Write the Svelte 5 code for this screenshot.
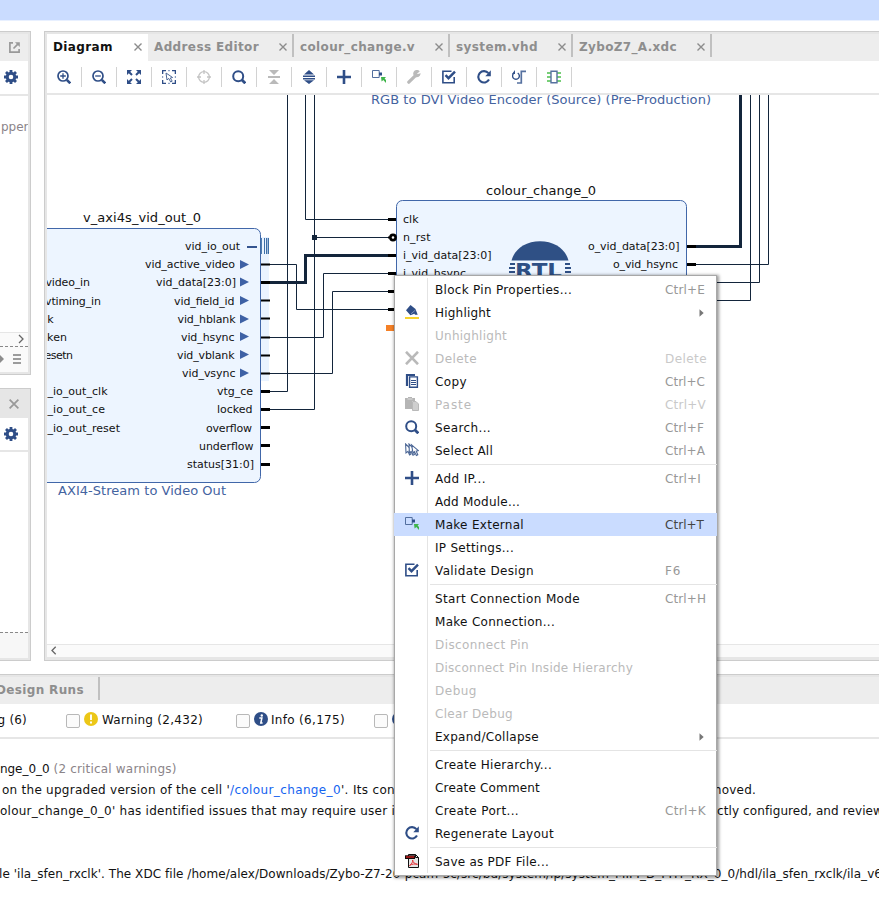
<script>
  // Spreads the letters of a label so that it fills the given width.
  function fit(node, width) {
    const natural = node.getBoundingClientRect().width;
    const count = node.textContent.length;
    if (width && count) node.style.letterSpacing = (width - natural) / count + 'px';
  }

  const tabs = [
    { label: 'Diagram', w: 101, t: 60, active: true },
    { label: 'Address Editor', w: 146, t: 105 },
    { label: 'colour_change.v', w: 156, t: 115 },
    { label: 'system.vhd', w: 123, t: 82 },
    { label: 'ZyboZ7_A.xdc', w: 139, t: 98 }
  ];

  const tools = ['zoomin', 'zoomout', 'fit', 'selectarea', 'target', 'search', 'collapse', 'expand',
    'plus', 'external', 'wrench', 'validate', 'refresh', 'route', 'chip'];

  const menu = [
    { label: 'Block Pin Properties...', t: 137, key: 'Ctrl+E', k: 40 },
    { label: 'Highlight', t: 56, icon: 'highlight', sub: true },
    { label: 'Unhighlight', t: 72, off: true },
    { label: 'Delete', t: 42, icon: 'delete', off: true, key: 'Delete', k: 42 },
    { label: 'Copy', t: 32, icon: 'copy', key: 'Ctrl+C', k: 40 },
    { label: 'Paste', t: 37, icon: 'paste', off: true, key: 'Ctrl+V', k: 41 },
    { label: 'Search...', t: 56, icon: 'search', key: 'Ctrl+F', k: 39 },
    { label: 'Select All', t: 58, icon: 'selectall', key: 'Ctrl+A', k: 40 },
    null,
    { label: 'Add IP...', t: 51, icon: 'plus', key: 'Ctrl+I', k: 36 },
    { label: 'Add Module...', t: 85, },
    { label: 'Make External', t: 89, icon: 'external', key: 'Ctrl+T', k: 39, active: true },
    { label: 'IP Settings...', t: 79 },
    { label: 'Validate Design', t: 99, icon: 'validate', key: 'F6', k: 16 },
    null,
    { label: 'Start Connection Mode', t: 145, key: 'Ctrl+H', k: 41 },
    { label: 'Make Connection...', t: 120 },
    { label: 'Disconnect Pin', t: 94, off: true },
    { label: 'Disconnect Pin Inside Hierarchy', t: 198, off: true },
    { label: 'Debug', t: 42, off: true },
    { label: 'Clear Debug', t: 78, off: true },
    { label: 'Expand/Collapse', t: 104, sub: true },
    null,
    { label: 'Create Hierarchy...', t: 117 },
    { label: 'Create Comment', t: 105 },
    { label: 'Create Port...', t: 84, key: 'Ctrl+K', k: 41 },
    { label: 'Regenerate Layout', t: 119, icon: 'refresh' },
    null,
    { label: 'Save as PDF File...', t: 114, icon: 'pdf' }
  ];

  // Pin label, right edge, baseline, width
  const outPins = [
    ['vid_io_out', 240, 250, 55], ['vid_active_video', 235, 268, 90], ['vid_data[23:0]', 236, 286, 80],
    ['vid_field_id', 234.5, 305, 60.5], ['vid_hblank', 235.5, 323, 58], ['vid_hsync', 234.5, 341, 53.5],
    ['vid_vblank', 234.5, 359, 57.5], ['vid_vsync', 235.5, 377, 53.5], ['vtg_ce', 253, 395, 36],
    ['locked', 252.5, 413, 35.5], ['overflow', 252, 432, 46], ['underflow', 253.5, 450, 54.5],
    ['status[31:0]', 254, 468, 67]
  ];
  const inPins = [
    ['video_in', 90, 286, 44.5], ['vtiming_in', 101, 305, 56], ['aclk', 53.5, 323, 23],
    ['aclken', 67, 341, 36], ['aresetn', 73, 359, 38.5], ['_io_out_clk', 107.5, 395, 60],
    ['_io_out_ce', 105, 413, 57.5], ['_io_out_reset', 120, 432, 72.5]
  ];
  const arrows = [264.5, 282, 300.5, 319, 336.5, 354.5, 373];
  const ports = [264.5, 300.5, 318.5, 337.5, 355.5, 373.5];
  const thickPorts = [282.5, 391.5, 409.5, 427.5, 445.5, 464.5];
  const wires = [
    'M270 264.5H296.5V309.5H389', 'M270 337.5H323.5V273.5H389', 'M270 373.5H332.5V291.5H389',
    'M270 391.5H287.5V95', 'M270 409.5H314.5V95', 'M305.5 95V219.5H389', 'M314.5 237.5H389',
    'M696 264.5H768.5V95', 'M687 282.5H759.5V95', 'M687 300.5H750.5V95'
  ];
</script>

{#snippet icon(name)}
  <svg class="ico" width="14" height="14" viewBox="0 0 14 14" fill="none" stroke="#2f4e87" stroke-width="2">
    {#if name === 'zoomin' || name === 'zoomout'}
      <circle cx="6" cy="6" r="5" stroke-width="1.7" /><path d="M9.8 9.8L13.3 13.3" stroke-width="2.6" />
      <path d={name === 'zoomin' ? 'M3.2 6H8.8M6 3.2V8.8' : 'M3.2 6H8.8'} stroke-width="1.3" />
    {:else if name === 'search'}
      <circle cx="6.2" cy="6.2" r="5" /><path d="M10 10L13.3 13.3" stroke-width="2.8" />
    {:else if name === 'fit'}
      <g fill="#2f4e87" stroke="none"><path d="M0 0H5L0 5ZM14 0V5L9 0ZM0 14V9L5 14ZM14 14H9L14 9Z" /></g>
      <path d="M1.5 1.5L5 5M12.5 1.5L9 5M1.5 12.5L5 9M12.5 12.5L9 9" />
    {:else if name === 'selectarea'}
      <path d="M.6 4V.6H4M10 .6H13.4V4M13.4 10V13.4H10M4 13.4H.6V10" stroke-width="1.4" />
      <path d="M6 .6H8M13.4 6V8M6 13.4H8M.6 6V8" stroke="#8fa2c4" stroke-width="1.2" />
      <path d="M4 3L5 10L6.7 8.4L8.7 12L10.2 11.2L8.3 8L10.6 7.5Z" stroke="#4c6796" stroke-width="1" fill="#fff" />
    {:else if name === 'target'}
      <circle cx="7" cy="7" r="5.4" stroke="#c4c4c4" stroke-width="1.3" />
      <path d="M7 0V4M7 10V14M0 7H4M10 7H14" stroke="#c4c4c4" stroke-width="1.3" />
    {:else if name === 'collapse'}
      <g fill="#bababa" stroke="none"><path d="M2 0H12L7 5ZM1 6H13V8H1ZM2 14H12L7 9Z" /></g>
    {:else if name === 'expand'}
      <g fill="#2f4e87" stroke="none"><path d="M7 0L12 4.5H2ZM1 5.4H13V7H1ZM1 8H13V9.4H1ZM7 14L12 10.2H2Z" /></g>
    {:else if name === 'plus'}
      <path d="M7 0V14M0 7H14" stroke-width="2.6" />
    {:else if name === 'external'}
      <path d="M.5 .5H7.2V7.5H.5Z" stroke="#536f9f" stroke-width="1" fill="none" />
      <path d="M7 2.5H10V5.5H7Z" fill="#2f4e87" stroke="none" />
      <path d="M9 7H14L12.6 8.6L14 10V13L11.3 10.1L9.6 11.5Z" fill="#3fb54a" stroke="none" />
    {:else if name === 'wrench'}
      <path d="M1.8 12.2L8.2 5.8" stroke="#bababa" stroke-width="3.2" stroke-linecap="round" />
      <path d="M11.8 1.3A3 3 0 1 0 12.8 4.2L10 4.8L9.2 3.8Z" fill="#bababa" stroke="#bababa" stroke-width="1.3" />
    {:else if name === 'validate'}
      <path d="M9.5 1.2H.9V12.7H12.2V7" stroke-width="1.6" /><path d="M3.5 5.2L6.5 8.2L13 1.6" stroke-width="2.4" />
    {:else if name === 'refresh'}
      <path d="M11.4 3.2A5.7 5.7 0 1 0 12 9.6" stroke-width="2.1" /><path d="M13.8 .3V6.2H8.3Z" fill="#2f4e87" stroke="none" />
    {:else if name === 'route'}
      <path d="M5.7 3A3.4 3.4 0 1 1 2.2 3" stroke-width="1.4" /><path d="M3 0V4H0Z" fill="#2f4e87" stroke="none" />
      <path d="M5 13H9.3V1.3H14" stroke="#5671a0" stroke-width="1.7" />
    {:else if name === 'chip'}
      <path d="M0 3H4M0 7H4M0 11H4M10 3H14M10 7H14M10 11H14" stroke="#4cc04c" stroke-width="1.6" />
      <path d="M4 1.3H10V12.7H4Z" stroke="#5671a0" stroke-width="1.4" fill="#fff" />
    {:else if name === 'highlight'}
      <path d="M5.5 0L10.5 4L12.7 9.8H10L9.4 8.8L5.4 10.2L1 5.3Z" fill="#2f4e87" stroke="none" />
      <path d="M6 8.8L10.5 5" stroke="#8fa2c4" stroke-width=".8" /><path d="M0 13H14" stroke="#f6cf16" stroke-width="1.8" />
    {:else if name === 'delete'}
      <path d="M1 .8L13 13.2M13 .8L1 13.2" stroke="#b9b9b9" stroke-width="2.6" />
    {:else if name === 'copy'}
      <path d="M2 12V1H10" stroke-width="2.2" /><path d="M4.6 2.9H12.4V13.3H4.6Z" fill="#fff" stroke-width="1.4" />
      <path d="M6 6.5H11M6 8.5H11M6 10.5H11" stroke-width="1" />
    {:else if name === 'paste'}
      <path d="M0 1H3V0H7V1H10V4H7V12H0Z" fill="#b5b5b5" stroke="none" /><path d="M2.5 2H7.5" stroke="#ddd" stroke-width="1" />
      <path d="M7.5 4.5H11L13.5 7V13.5H7.5Z" fill="#cfcfcf" stroke="#b9b9b9" stroke-width="1" />
    {:else if name === 'selectall'}
      <g stroke="#4c6796" stroke-width="1.1" fill="#fff">
        <path d="M.6 1L1 10L3 8.4L4.6 12L6 11L4.8 7.4L7 7Z" />
        <path d="M4 1L4.400 10L6.200 8.400L8 12.200L9.400 11.400L8 7.600L10.200 7Z" />
        <path d="M6.600 1.800L8 10L9.400 8.600L11.400 12.600L12.800 11.800L11.200 8.200L13.400 7.600Z" />
      </g>
    {:else if name === 'pdf'}
      <path d="M3.5 .5H10.5L13.5 3.5V13.5H3.5Z" fill="#e6e6e6" stroke="#111" stroke-width="1" />
      <path d="M10.5 .5V3.5H13.5" stroke="#111" stroke-width="1" />
      <path d="M0 1.3H10V5H0Z" fill="#150808" stroke="none" /><path d="M1 3H9.2" stroke="#e22" stroke-width="1.2" />
      <path d="M4.5 11.5C7 10 8 7.500 7.600 6C8 8.500 10 10.300 12.500 10.300C10 9.600 7 10 4.500 11.500" stroke="#e5343a" stroke-width="1" />
    {:else if name === 'gear'}
      <path d="M7 0V14M0 7H14M2 2L12 12M12 2L2 12" stroke-width="2.8" />
      <circle cx="7" cy="7" r="3.8" fill="#fff" stroke-width="3" />
    {/if}
  </svg>
{/snippet}

{#snippet cross(size, color)}
  <svg class="ico" width={size} height={size} viewBox="0 0 8 8"><path d="M.5 .5L7.5 7.5M7.5 .5L.5 7.5" stroke={color} stroke-width="1.4" /></svg>
{/snippet}

<div class="app">
  <div class="banner"></div>

  <div class="work">
    <aside>
      <section class="side first">
        <header>
          <svg class="ico" width="11" height="11" viewBox="0 0 11 11" fill="none" stroke="#999" stroke-width="1.7">
            <path d="M4 .9H.9V10.1H10.1V7M4.5 6.5L8.8 2.2" /><path d="M6 .2H10.8V5Z" fill="#999" stroke="none" />
          </svg>
        </header>
        <div class="gearbar">{@render icon('gear')}</div>
        <div class="tree"><span>pper</span></div>
        <div class="hscroll"><svg width="6" height="10" viewBox="0 0 6 10"><path d="M1 1L5 5L1 9" fill="none" stroke="#666" stroke-width="1.3" /></svg></div>
        <div class="foot">
          <svg width="4" height="10" viewBox="0 0 4 10"><path d="M0 1L4 5L0 9Z" fill="#8c8c8c" /></svg>
          <svg width="8" height="10" viewBox="0 0 8 10"><path d="M0 1H8M0 5H8M0 9H8" stroke="#7d7d7d" stroke-width="1.6" /></svg>
        </div>
      </section>
      <section class="side second">
        <header>{@render cross(10, '#999')}</header>
        <div class="gearbar">{@render icon('gear')}</div>
        <div class="tree"></div>
        <div class="status"></div>
      </section>
    </aside>

    <main>
      <nav class="tabs">
        {#each tabs as tab}
          <div class="tab" class:active={tab.active} style:width="{tab.w}px">
            <span use:fit={tab.t}>{tab.label}</span>
            {@render cross(8, '#8c8c8c')}
          </div>
        {/each}
      </nav>
      <div class="tools">
        {#each tools as t}<div class="tool">{@render icon(t)}</div>{/each}
      </div>
      <svg class="canvas" width="832" height="549" viewBox="47 95 832 549">
        <text x="371" y="104" class="caption" textLength="340">RGB to DVI Video Encoder (Source) (Pre-Production)</text>

        <rect x="261" y="237" width="8" height="144" fill="#eaf3ff" />
        <rect x="20" y="228.5" width="240.5" height="254" rx="6" class="block" />
        <text x="83" y="222" class="name" textLength="118">v_axi4s_vid_out_0</text>
        <text x="58" y="495" class="caption" textLength="168">AXI4-Stream to Video Out</text>
        {#each [...inPins, ...outPins] as [label, x, y, w]}
          <text {x} {y} class="pin" text-anchor="end" textLength={w}>{label}</text>
        {/each}
        {#each arrows as y}<path d="M240 {y - 4.5}L249 {y}L240 {y + 4.5}Z" fill="#3e61a5" />{/each}
        <path d="M247 247H257" stroke="#34548f" stroke-width="2" />
        <path d="M261.2 238V254M268.3 238V254" stroke="#3e6fa8" stroke-width="1.4" />
        <path d="M264.5 238V254M266.5 238V254" stroke="#3e6fa8" />

        {#each wires as d}<path {d} class="wire" />{/each}
        <path d="M269 282.5H305.5V255.5H389M695 246.5H740.5V95" class="wire bus" />
        <rect x="312" y="235" width="5" height="5" fill="#13253b" />
        {#each ports as y}<path d="M261 {y}H270" stroke="#000" stroke-width="2" />{/each}
        {#each thickPorts as y}<path d="M261 {y}H270" stroke="#000" stroke-width="3" />{/each}
        {#each [219.5, 255.5, 273.5, 291.5, 309.5] as y}<path d="M388 {y}H397" stroke="#000" stroke-width="3" />{/each}
        <path d="M386 328H396" stroke="#f58026" stroke-width="6" />

        <rect x="396.5" y="200.5" width="290" height="160" rx="6" class="block" />
        <path d="M388 237.5H391" stroke="#000" stroke-width="2" />
        <circle cx="393" cy="237.5" r="2.6" fill="#fff" stroke="#000" stroke-width="2.6" />
        <path d="M687 246.5H696M687 264.5H696" stroke="#000" stroke-width="3" />
        <text x="486" y="195" class="name" textLength="110">colour_change_0</text>
        <text x="403" y="223" class="pin" textLength="15.5">clk</text>
        <text x="403" y="241" class="pin" textLength="27.5">n_rst</text>
        <text x="403" y="259" class="pin" textLength="88.5">i_vid_data[23:0]</text>
        <text x="403" y="277" class="pin" textLength="63">i_vid_hsync</text>
        <text x="588" y="250" class="pin" textLength="91.5">o_vid_data[23:0]</text>
        <text x="613" y="268" class="pin" textLength="65">o_vid_hsync</text>
        <path d="M511.5 260.5C513 254 518 248.5 523 245.5C533 239.8 547 239.8 557 245.5C562 248.5 567 254 568.5 260.5Z" fill="#2f5085" />
        <path d="M510 264H515M509 268H515M509 272H515M565 264H570M565 268H571M565 272H571" stroke="#2f5085" stroke-width="1.8" />
        <text x="515" y="277" class="rtl" textLength="47" lengthAdjust="spacingAndGlyphs">RTL</text>
      </svg>
      <div class="hbar"><svg width="6" height="9" viewBox="0 0 6 9"><path d="M4.7 .8L1 4.5L4.7 8.2" fill="none" stroke="#666" stroke-width="1.3" /></svg></div>
    </main>
  </div>

  <section class="messages">
    <nav class="mtabs"><div class="mtab"><span use:fit={88}>Design Runs</span></div></nav>
    <div class="filters">
      <span class="crit">Critical warning (6)</span>
      <i class="box"></i>
      <svg class="dot" width="14" height="14" viewBox="0 0 14 14"><circle cx="7" cy="7" r="7" fill="#ecc717" /><path d="M7 2.5V8M7 9.5V11.5" stroke="#fff" stroke-width="1.9" /></svg>
      <span class="warn" use:fit={102}>Warning (2,432)</span>
      <i class="box"></i>
      <svg class="dot" width="14" height="14" viewBox="0 0 14 14"><circle cx="7" cy="7" r="7" fill="#2f4e87" /><path d="M5.3 6H7.9L6.8 11H8.6" stroke="#fff" stroke-width="1.5" fill="none" /><circle cx="7.8" cy="3.5" r="1.2" fill="#fff" /></svg>
      <span class="info" use:fit={74}>Info (6,175)</span>
      <i class="box"></i>
      <svg class="dot" width="14" height="14" viewBox="0 0 14 14"><circle cx="7" cy="7" r="7" fill="#2f4e87" /></svg>
    </div>
    <div class="log">
      <p><span use:fit={49.5}>nge_0_0</span><span class="dim" use:fit={123}>(2 critical warnings)</span></p>
      <p class="l2"><span class="keep" use:fit={228}>on the upgraded version of the cell '</span><a href="#cell" use:fit={111}>/colour_change_0</a><span use:fit={54}>'. Its con</span><b class="end">removed.</b></p>
      <p class="l3"><span use:fit={395}>olour_change_0_0' has identified issues that may require user i</span><b use:fit={166}>ctly configured, and review</b></p>
      <p></p>
      <p></p>
      <p class="l6"><span use:fit={883}>le 'ila_sfen_rxclk'. The XDC file /home/alex/Downloads/Zybo-Z7-20-pcam-5c/src/bd/system/ip/system_MIPI_D_PHY_RX_0_0/hdl/ila_sfen_rxclk/ila_v6</span></p>
    </div>
  </section>

  <div class="menu">
    {#each menu as item}
      {#if item}
        <div class="row" class:off={item.off} class:active={item.active}>
          <div class="gutter">{#if item.icon}{@render icon(item.icon)}{/if}</div>
          <div class="label"><span use:fit={item.t}>{item.label}</span></div>
          <div class="key">
            {#if item.key}<span use:fit={item.k}>{item.key}</span>{/if}
            {#if item.sub}<svg class="sub" width="5" height="8" viewBox="0 0 5 8"><path d="M.5 .2L4.700 4L.5 7.800Z" fill="#777" /></svg>{/if}
          </div>
        </div>
      {:else}
        <div class="sep"></div>
      {/if}
    {/each}
  </div>
</div>

<style>
  :global(body) { background: #fff; }
  .app {
    position: relative; width: 879px; height: 901px; overflow: hidden;
    display: flex; flex-direction: column; box-sizing: border-box;
    font: 12px/16px "DejaVu Sans", sans-serif; color: #111;
  }
  .app *, .app { box-sizing: border-box; }
  span { white-space: pre; flex: none; display: inline-block; }
  .ico { display: block; flex: none; }
  .banner { height: 21px; flex: none; background: #cadcff; border-bottom: 1px solid #e8f0ff; margin-bottom: 10px; }
  .work { display: flex; gap: 13px; height: 630px; flex: none; }
  aside { width: 31px; display: flex; flex-direction: column; gap: 13px; flex: none; }
  .side {
    display: flex; flex-direction: column; background: #e6e6e6; overflow: hidden;
    border: 1px solid #ccc; border-left: 0; padding: 2px 2px 2px 0;
  }
  .first { height: 344px; }
  .second { flex: 1; }
  .side header { height: 27px; background: #ededed; display: flex; align-items: center; padding-left: 9px; flex: none; }
  .side header .ico { margin-top: -1px; }
  .second header { background: #e6e6e6; }
  .gearbar { height: 35px; flex: none; background: #fff; border-bottom: 2px solid #e6e6e6; padding: 9px 0 0 4px; }
  .second .gearbar { height: 34px; }
  .tree { flex: 1; background: #fff; color: #8b8489; padding: 23px 0 0 1px; overflow: hidden; }
  .hscroll { height: 14px; background: #fafafa; border-top: 1px solid #e6e6e6; display: flex; align-items: center; padding: 0 0 1px 18px; flex: none; }
  .foot { height: 26px; flex: none; background: #fafafa; border-top: 1px dashed #888; display: flex; gap: 9px; align-items: center; padding-bottom: 1px; }
  .status { height: 26px; flex: none; background: #f7f7f7; border-top: 1px dashed #888; }
  main { flex: 1; border: 1px solid #ccc; border-right: 0; padding: 2px 0 3px 2px; background: #e6e6e6; display: flex; flex-direction: column; min-width: 0; }
  .tabs { height: 27px; background: #ededed; display: flex; flex: none; }
  .tab {
    height: 23px; border-right: 2px solid #c0c0c0; display: flex; justify-content: space-between; align-items: flex-start;
    padding: 5px 5px 0 6px; font-weight: 700; color: #8e8e8e; flex: none;
  }
  .tab.active { height: 27px; border-right: 0; background: #fff; color: #111; padding-right: 6px; }
  .tab .ico { margin-top: 4px; }
  .tools { height: 34px; flex: none; background: #fff; border-bottom: 2px solid #e6e6e6; display: flex; align-items: center; }
  .tool { width: 35px; height: 20px; border-right: 1px solid #d2d2d2; display: flex; align-items: center; justify-content: center; }
  .canvas { display: block; background: #fff; flex: none; }
  .canvas text { white-space: pre; }
  .caption { font-size: 13px; fill: #44639f; }
  .name { font-size: 13px; fill: #111; }
  .pin { font-size: 11px; fill: #111; }
  .rtl { font-size: 19px; font-weight: 700; fill: #2f5085; }
  .block { fill: #edf5ff; stroke: #4167a9; }
  .wire { fill: none; stroke: #13253b; }
  .bus { stroke-width: 3; }
  .hbar { flex: 1; background: #fafafa; border-top: 1px solid #e6e6e6; display: flex; align-items: center; padding: 0 0 1px 4px; }

  .messages { margin-top: 13px; flex: 1; border-top: 1px solid #ccc; display: flex; flex-direction: column; }
  .mtabs { height: 29px; border-top: 2px solid #e6e6e6; background: #ededed; flex: none; display: flex; }
  .mtab { width: 104px; margin-left: -4px; height: 23px; border-right: 2px solid #c0c0c0; padding-top: 5px; font-weight: 700; color: #8e8e8e; }
  .filters { height: 35px; flex: none; border-bottom: 2px solid #e6e6e6; background: #fff; display: flex; align-items: center; }
  .filters span { margin-top: -2px; }
  .crit { width: 27px; direction: rtl; unicode-bidi: plaintext; text-align: right; display: flex; justify-content: flex-start; margin-right: 39px; letter-spacing: .2px; }
  .warn { margin-right: 33px; padding-left: 1px; }
  .info { margin-right: 29px; }
  .box { width: 14px; height: 14px; border: 1px solid #b8b8b8; border-radius: 2px; background: #fbfbfb; flex: none; }
  .dot { margin: -4px 3px 0 4px; flex: none; }
  .log { padding-top: 19px; display: flex; flex-direction: column; }
  p { margin: 0; height: 21px; display: flex; align-items: center; white-space: pre; }
  .dim { color: #8b8489; margin-left: 4px; }
  .l2 { padding-left: 2px; }
  a { color: #1463f0; text-decoration: none; display: inline-block; }
  b { font-weight: 400; display: inline-block; }
  .end { margin-left: auto; margin-right: 123px; letter-spacing: .2px; }
  .l3 b { margin-left: 322px; flex: none; }
  .l6 { margin-left: -1px; }

  .menu {
    position: absolute; left: 394px; top: 275px; width: 323px; height: 601px; background: #fff;
    border: 1px solid #a8a8a8; padding: 2px 0; display: flex; flex-direction: column;
    box-shadow: 1px 1px 3px 1px rgba(0, 0, 0, .4);
  }
  .row { height: 23px; display: flex; flex: none; }
  .gutter { width: 33px; border-right: 1px solid #e4e4e4; padding: 4px 0 0 10px; flex: none; }
  .label { width: 237px; padding: 4px 0 0 7px; flex: none; }
  .key { flex: 1; padding-top: 4px; color: #989898; display: flex; }
  .off { color: #bababa; }
  .off .key { color: #c9c9c9; }
  .sub { margin: 4px 0 0 34px; }
  .row.active { background: #cadcff; margin: 0 -1px; padding: 0 1px; }
  .row.active .gutter { border-color: transparent; }
  .row.active .key { color: #444; }
  .sep { height: 5px; flex: none; margin-right: -1px; border-left: 1px solid #e4e4e4; margin-left: 32px; background: linear-gradient(#e4e4e4, #e4e4e4) 2px 2px / 100% 1px no-repeat; }
</style>
